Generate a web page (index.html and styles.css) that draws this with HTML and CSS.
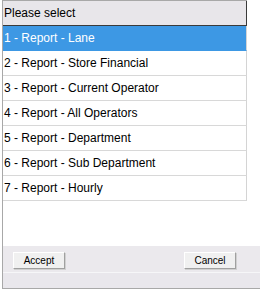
FILE: index.html
```html
<!DOCTYPE html>
<html>
<head>
<meta charset="utf-8">
<link rel="stylesheet" href="styles.css">
</head>
<body>
<div class="frame">
  <div class="content">
    <div class="list">
      <div class="head">Please select</div>
      <div class="row sel">1 - Report - Lane</div>
      <div class="row">2 - Report - Store Financial</div>
      <div class="row">3 - Report - Current Operator</div>
      <div class="row">4 - Report - All Operators</div>
      <div class="row">5 - Report - Department</div>
      <div class="row">6 - Report - Sub Department</div>
      <div class="row">7 - Report - Hourly</div>
    </div>
    <div class="gutter"></div>
  </div>
  <div class="panel">
    <button class="btn">Accept</button>
    <button class="btn">Cancel</button>
  </div>
  <div class="status"></div>
</div>
</body>
</html>
```
FILE: styles.css
```css
html, body {
  margin: 0;
  padding: 0;
  background: #ffffff;
}
body {
  width: 260px;
  height: 290px;
  overflow: hidden;
  font-family: "Liberation Sans", Arial, sans-serif;
}
.frame {
  box-sizing: border-box;
  width: 259px;
  height: 289px;
  margin-left: 2px;
  border-left: 1px solid #a8a8a8;
  border-bottom: 1px solid #a8a8a8;
  display: flex;
  flex-direction: column;
}
.content {
  flex: 1;
  display: flex;
  background: #ffffff;
}
.list {
  width: 244px;
  border-top: 1px solid #a8a8a8;
  display: flex;
  flex-direction: column;
}
.head {
  height: 24px;
  line-height: 24px;
  background: #e8e6ea;
  border-right: 1px solid #3a3a3a;
  border-bottom: 1px solid #3a3a3a;
  padding-left: 1px;
  font-size: 12px;
  color: #000;
}
.row {
  height: 24px;
  line-height: 24px;
  border-right: 1px solid #d4d4d4;
  border-bottom: 1px solid #d8d8d8;
  padding-left: 1px;
  font-size: 12px;
  color: #000;
}
.row.sel {
  background: #3d98e4;
  color: #ffffff;
  border-bottom-color: #3d98e4;
}
.gutter {
  flex: 1;
  margin-top: 90px;
  border-right: 1px solid #b8b8b8;
}
.panel {
  height: 26px;
  background: #ebe9ed;
  border-right: 1px solid #b8b8b8;
  display: flex;
  justify-content: space-between;
  align-items: flex-start;
  padding: 6px 24px 0 10px;
  box-sizing: border-box;
}
.btn {
  width: 52px;
  height: 17px;
  padding: 0;
  margin: 0;
  background: #f0f0f0;
  border: 1px solid;
  border-color: #ffffff #a0a0a0 #a0a0a0 #ffffff;
  box-shadow: 1px 1px 0 #d0d0d0;
  font-family: "Liberation Sans", Arial, sans-serif;
  font-size: 10px;
  color: #000;
}
.status {
  height: 15px;
  background: #e9e7ec;
  border-top: 1px solid #f6f6f8;
  border-right: 1px solid #b8b8b8;
}
```
